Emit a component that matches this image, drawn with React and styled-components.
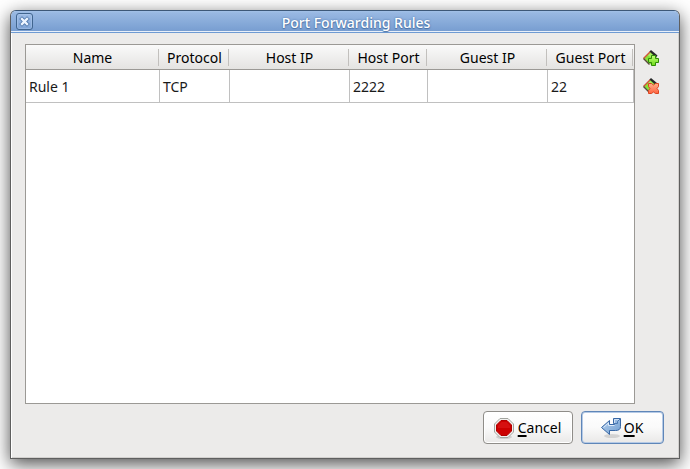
import React from "react";
import styled, { createGlobalStyle } from "styled-components";

const GlobalStyle = createGlobalStyle`
  *, *::before, *::after { box-sizing: border-box; }
  body {
    margin: 0;
    background: #ffffff;
    color: #1a1a1a;
    font: 14px/20px "Noto Sans", "Open Sans", sans-serif;
    overflow: hidden;
  }
  button { font: inherit; color: inherit; margin: 0; cursor: default; }
`;

const Desktop = styled.div`
  display: flex;
  min-height: 100vh;
  padding: 10px;
`;

const Dialog = styled.section`
  flex: 1;
  min-width: 0;
  display: flex;
  flex-direction: column;
  border: 1px solid #5f5f5f;
  border-top-color: #3d5878;
  border-radius: 6px 6px 0 0;
  background: #ecebea;
  box-shadow: 0 5px 18px 0 rgba(0, 0, 0, 0.7);
`;

const TitleBar = styled.header`
  display: flex;
  align-items: center;
  height: 22px;
  padding-left: 5px;
  border-radius: 5px 5px 0 0;
  border-bottom: 1px solid #6f9bd3;
  background: linear-gradient(#a3c1e8 0, #98b8e2 2px, #789ed1 20px, #e8f0fa 20px);
`;

const CloseButton = styled.button`
  display: flex;
  align-items: center;
  justify-content: center;
  width: 17px;
  height: 17px;
  padding: 0;
  border: 1px solid #40658f;
  border-radius: 3px;
  background: linear-gradient(#9dbce5, #7fa4d6);
  box-shadow: inset 0 0 0 1px rgba(190, 213, 243, 0.35);
`;

const Title = styled.h1`
  flex: 1;
  margin: 0;
  padding-top: 2px;
  text-align: center;
  font-size: 14px;
  font-weight: 500;
  line-height: 20px;
  color: #ffffff;
  text-shadow: 0 1px 1px #4870a5, 0 0 2px #4870a5;
`;

const Body = styled.div`
  flex: 1;
  display: flex;
  flex-direction: column;
  gap: 7px;
  padding: 11px 15px 14px 13px;
  border-left: 1px solid #ffffff;
  box-shadow: inset -1px -1px 0 #d2d0ce;
`;

const Editor = styled.div`
  flex: 1;
  display: flex;
  gap: 8px;
  padding-right: 5px;
`;

const TableFrame = styled.div`
  flex: 1;
  min-width: 0;
  border: 1px solid #9b9995;
  background: #ffffff;
`;

const RulesTable = styled.table`
  width: 100%;
  table-layout: fixed;
  border-collapse: separate;
  border-spacing: 0;
`;

const Column = styled.col`
  width: ${({ $width }) => ($width ? `${$width}px` : "auto")};
`;

const HeaderCell = styled.th`
  height: 25px;
  padding: 1px 1px 0 0;
  border-bottom: 1px solid #9b9995;
  font-weight: 400;
  line-height: 23px;
  white-space: nowrap;
  background:
    linear-gradient(#c2c0bd, #c2c0bd) right 1px center / 1px 17px no-repeat,
    linear-gradient(#fafafa, #e4e3e1);
  color: #000000;
`;

const Cell = styled.td`
  height: 33px;
  padding: 2px 3px 0 3px;
  border: solid #c0c0c0;
  border-width: 0 1px 1px 0;
  white-space: nowrap;
`;

const Tools = styled.div`
  display: flex;
  flex-direction: column;
  gap: 12px;
  padding-top: 6px;
`;

const ToolButton = styled.button`
  display: flex;
  width: 16px;
  height: 16px;
  padding: 0;
  border: 0;
  background: none;
`;

const Actions = styled.footer`
  display: flex;
  justify-content: flex-end;
  gap: 8px;
`;

const ActionButton = styled.button`
  display: flex;
  align-items: center;
  justify-content: center;
  gap: ${({ $primary }) => ($primary ? 2 : 3)}px;
  min-width: ${({ $primary }) => ($primary ? 83 : 90)}px;
  height: 33px;
  padding: 0 10px 0 8px;
  border: 1px solid ${({ $primary }) => ($primary ? "#5f86b8" : "#8f8d89")};
  border-radius: 4px;
  background: linear-gradient(#ffffff, #fafafa 50%, #e9e8e7);
  box-shadow: ${({ $primary }) => ($primary ? "inset 0 0 0 1px #b5cae6" : "inset 0 0 0 1px #ffffff")};
  color: #000000;
`;

const Mnemonic = styled.span`
  text-decoration: underline;
  text-decoration-thickness: 2px;
  text-underline-offset: 2px;
`;

function CloseIcon() {
  return (
    <svg width="11" height="11" viewBox="0 0 11 11" aria-hidden="true">
      <path d="M3 3 8 8M8 3 3 8" stroke="#4f78ad" strokeWidth="4" strokeLinecap="square" />
      <path d="M3 3 8 8M8 3 3 8" stroke="#edf5ff" strokeWidth="2.4" strokeLinecap="square" />
    </svg>
  );
}

function RuleTag() {
  return (
    <>
      <path d="M1 8.5 7.5 1.5 14 8 7.5 14.5Z" fill="#86e236" />
      <path d="M7 2.5 11 6 9 8 4.5 5Z" fill="#a9ee63" />
      <path d="M.5 8.5 7.5 1.5" stroke="#d0573a" strokeWidth="1.4" />
      <path d="M.5 8.5 6.5 14.5" stroke="#5a4a38" strokeWidth="1.4" />
      <path d="M6.5 1.5 8 0 14.5 5.5 13 7.5Z" fill="#262829" />
    </>
  );
}

function AddIcon() {
  return (
    <svg width="16" height="16" viewBox="0 0 16 16" aria-hidden="true">
      <defs>
        <linearGradient id="plusFill" x1="0" y1="0" x2="0" y2="1">
          <stop offset="0" stopColor="#c0ff78" />
          <stop offset="1" stopColor="#6ddb16" />
        </linearGradient>
      </defs>
      <RuleTag />
      <path d="M8.5 5.5h4v3h3v4h-3v3h-4v-3h-3v-4h3Z" fill="url(#plusFill)" stroke="#2f8a08" />
    </svg>
  );
}

function RemoveIcon() {
  return (
    <svg width="16" height="16" viewBox="0 0 16 16" aria-hidden="true">
      <defs>
        <linearGradient id="crossFill" x1="0" y1="0" x2="0" y2="1">
          <stop offset="0" stopColor="#ffb08a" />
          <stop offset="1" stopColor="#ff6340" />
        </linearGradient>
      </defs>
      <RuleTag />
      <path
        d="M5.5 5.5H8.5L10.5 7 12.5 5.5H15.5V8.5L14 10.5 15.5 12.5V15.5H12.5L10.5 14 8.5 15.5H5.5V12.5L7 10.5 5.5 8.5Z"
        fill="url(#crossFill)"
        stroke="#dc4420"
        strokeLinejoin="round"
      />
    </svg>
  );
}

function StopIcon() {
  return (
    <svg width="22" height="22" viewBox="0 0 22 22" aria-hidden="true">
      <ellipse cx="11" cy="20" rx="8" ry="2" fill="#000000" opacity=".13" />
      <path d="M7 1.5h8l5.5 5.5v8L15 20.5H7L1.5 15V7Z" fill="#f1f1ef" stroke="#a2a49f" />
      <path d="M8 3.5h6l4.5 4.5v6L14 18.5H8L3.5 14V8Z" fill="#cc0000" stroke="#b00000" />
      <path d="M8.5 5h5l3.5 3.5V11H5V8.5Z" fill="#df2020" opacity=".5" />
    </svg>
  );
}

function EnterIcon() {
  return (
    <svg width="22" height="22" viewBox="0 0 22 22" aria-hidden="true">
      <defs>
        <linearGradient id="arrowFill" x1="0" y1="0" x2="1" y2="1">
          <stop offset="0" stopColor="#b9d2ee" />
          <stop offset="1" stopColor="#6f9dd0" />
        </linearGradient>
      </defs>
      <ellipse cx="12" cy="19" rx="8" ry="2" fill="#000000" opacity=".12" />
      <path
        d="M1.5 10.5 9.5 3.5V7.5H14.5V6.5H13.5V1.5H20.5V9.5C20.5 12.5 18.5 13.5 15.5 13.5H9.5V17.5Z"
        fill="url(#arrowFill)"
        stroke="#3767a5"
        strokeLinejoin="round"
      />
      <path d="M3.5 10.5 8.5 6V8.5H14.5" fill="none" stroke="#dceafa" />
      <path d="M14.5 6V2.5H19.5" fill="none" stroke="#d0e1f5" />
      <path d="M14.5 6.5H17.5V4.5L20 2" fill="none" stroke="#4b79b3" />
    </svg>
  );
}

const columns = [
  { label: "Name" },
  { label: "Protocol", width: 70 },
  { label: "Host IP", width: 120 },
  { label: "Host Port", width: 78 },
  { label: "Guest IP", width: 120 },
  { label: "Guest Port", width: 86 },
];

const rules = [["Rule 1", "TCP", "", "2222", "", "22"]];

export default function App() {
  return (
    <>
      <GlobalStyle />
      <Desktop>
        <Dialog role="dialog" aria-labelledby="dialog-title">
          <TitleBar>
            <CloseButton type="button" aria-label="Close">
              <CloseIcon />
            </CloseButton>
            <Title id="dialog-title">Port Forwarding Rules</Title>
          </TitleBar>
          <Body>
            <Editor>
              <TableFrame>
                <RulesTable aria-labelledby="dialog-title">
                  <colgroup>
                    {columns.map((column) => (
                      <Column key={column.label} $width={column.width} />
                    ))}
                  </colgroup>
                  <thead>
                    <tr>
                      {columns.map((column) => (
                        <HeaderCell key={column.label} scope="col">{column.label}</HeaderCell>
                      ))}
                    </tr>
                  </thead>
                  <tbody>
                    {rules.map((rule) => (
                      <tr key={rule[0]}>
                        {rule.map((value, index) => (
                          <Cell key={columns[index].label}>{value}</Cell>
                        ))}
                      </tr>
                    ))}
                  </tbody>
                </RulesTable>
              </TableFrame>
              <Tools>
                <ToolButton type="button" aria-label="Add rule"><AddIcon /></ToolButton>
                <ToolButton type="button" aria-label="Remove rule"><RemoveIcon /></ToolButton>
              </Tools>
            </Editor>
            <Actions>
              <ActionButton type="button">
                <StopIcon />
                <span><Mnemonic>C</Mnemonic>ancel</span>
              </ActionButton>
              <ActionButton type="button" $primary>
                <EnterIcon />
                <span><Mnemonic>O</Mnemonic>K</span>
              </ActionButton>
            </Actions>
          </Body>
        </Dialog>
      </Desktop>
    </>
  );
}
